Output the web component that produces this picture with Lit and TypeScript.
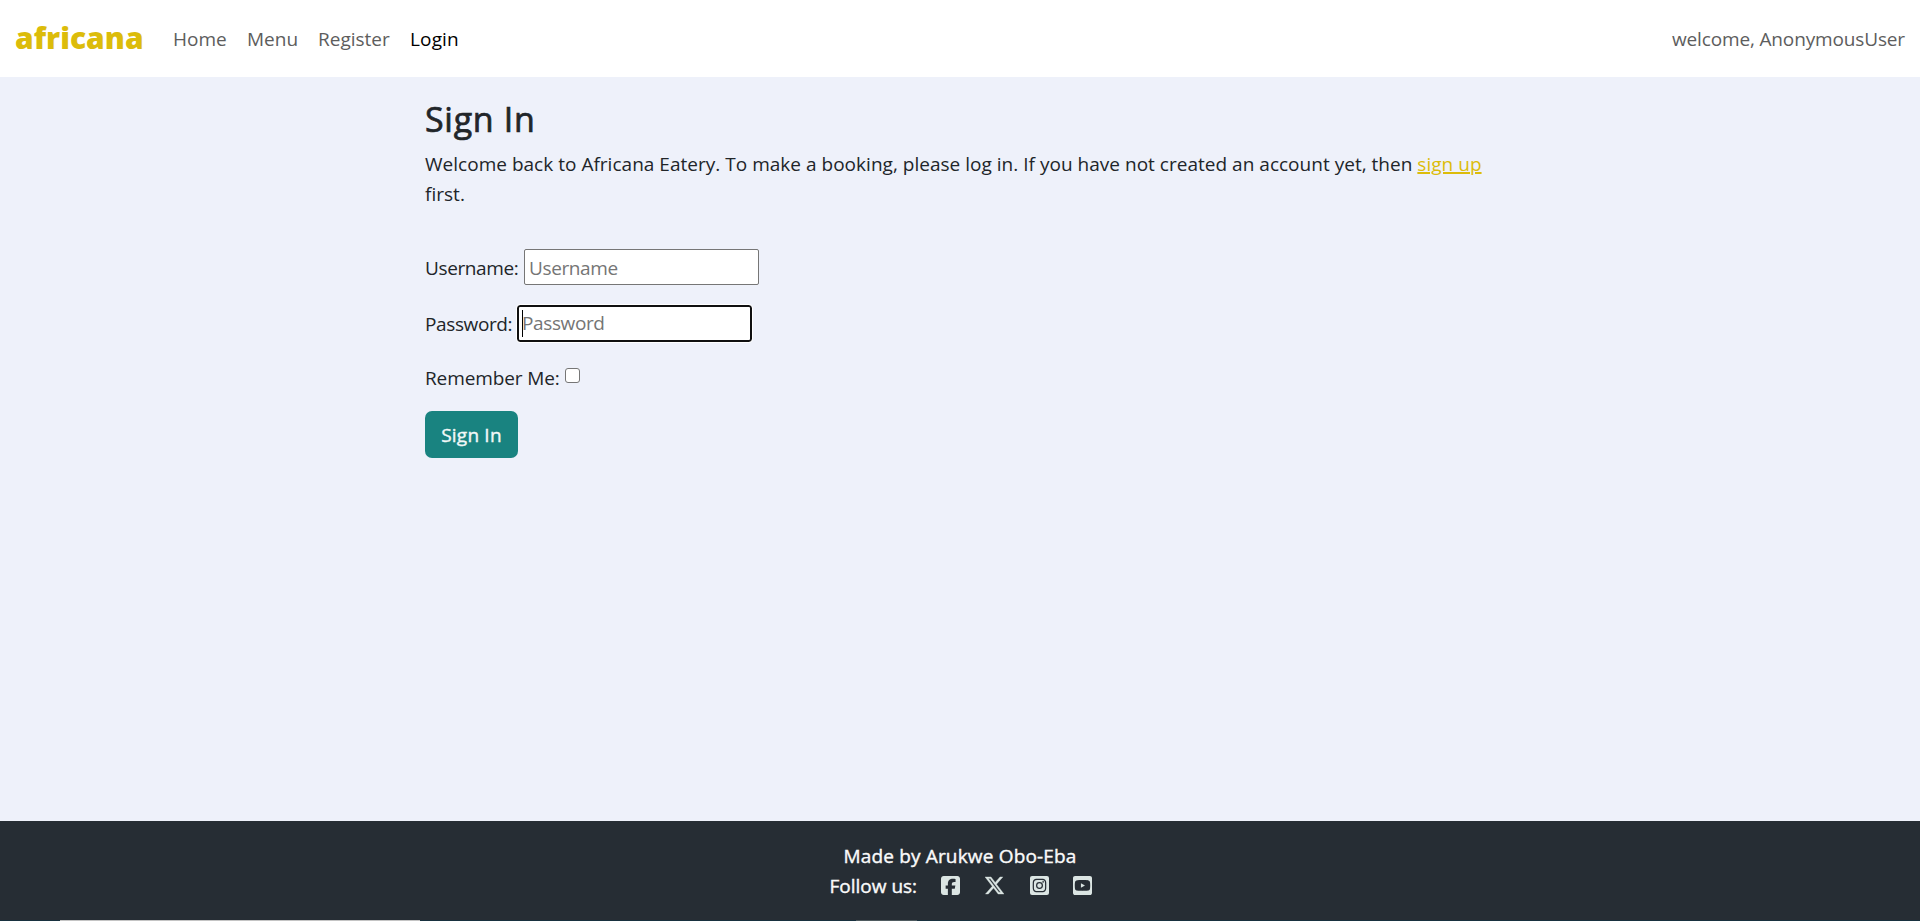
import { LitElement, html, css, svg } from "lit";
import { customElement } from "lit/decorators.js";

const ICONS = [
  {
    name: "Facebook", box: "0 32 448 448", cls: "fb",
    d: "M64 32C28.7 32 0 60.7 0 96V416c0 35.3 28.7 64 64 64h98.2V334.2H109.4V256h52.8V222.3c0-87.1 39.4-127.5 125-127.5c16.2 0 44.2 3.2 55.7 6.4V172c-6-.6-16.5-1-29.6-1c-42 0-58.2 15.9-58.2 57.2V256h83.6l-14.4 78.2H255V480H384c35.3 0 64-28.7 64-64V96c0-35.3-28.7-64-64-64H64z",
  },
  {
    name: "X", box: "26 26 461 461", cls: "x",
    d: "M389.2 48h70.6L305.6 224.2 487 464H345L233.7 318.6 106.5 464H35.8L200.7 275.5 26.8 48H172.4L272.9 180.9 389.2 48zM364.4 421.8h39.1L151.1 88h-42L364.4 421.8z",
  },
  {
    name: "Instagram", box: "0 32 448 448", cls: "ig",
    d: "M224,202.66A53.34,53.34,0,1,0,277.36,256,53.38,53.38,0,0,0,224,202.66Zm124.71-41a54,54,0,0,0-30.41-30.41c-21-8.29-71-6.43-94.3-6.43s-73.25-1.93-94.31,6.43a54,54,0,0,0-30.41,30.41c-8.28,21-6.43,71.05-6.43,94.33S91,329.26,99.32,350.33a54,54,0,0,0,30.41,30.41c21,8.29,71,6.43,94.31,6.43s73.24,1.93,94.3-6.43a54,54,0,0,0,30.41-30.41c8.35-21,6.43-71.05,6.43-94.33S357.1,182.74,348.75,161.67ZM224,338a82,82,0,1,1,82-82A81.9,81.9,0,0,1,224,338Zm85.38-148.3a19.14,19.14,0,1,1,19.13-19.14A19.1,19.1,0,0,1,309.42,189.74ZM400,32H48A48,48,0,0,0,0,80V432a48,48,0,0,0,48,48H400a48,48,0,0,0,48-48V80A48,48,0,0,0,400,32ZM382.88,322c-1.29,25.63-7.14,48.34-25.85,67s-41.4,24.63-67,25.85c-26.41,1.49-105.59,1.49-132,0-25.63-1.29-48.26-7.15-67-25.85s-24.63-41.42-25.85-67c-1.49-26.42-1.49-105.61,0-132,1.29-25.63,7.07-48.34,25.85-67s41.47-24.56,67-25.78c26.41-1.49,105.59-1.49,132,0,25.63,1.29,48.33,7.15,67,25.85s24.63,41.42,25.85,67.05C384.37,216.44,384.37,295.56,382.88,322Z",
  },
  {
    name: "YouTube", box: "0 32 448 448", cls: "yt",
    d: "M186.8 202.1l95.2 54.1-95.2 54.1V202.1zM448 80v352c0 26.5-21.5 48-48 48H48c-26.5 0-48-21.5-48-48V80c0-26.5 21.5-48 48-48h352c26.5 0 48 21.5 48 48zm-42 176.3s0-59.6-7.6-88.2c-4.2-15.8-16.5-28.2-32.2-32.4C337.9 128 224 128 224 128s-113.9 0-142.2 7.7c-15.7 4.2-28 16.6-32.2 32.4-7.6 28.5-7.6 88.2-7.6 88.2s0 59.6 7.6 88.2c4.2 15.8 16.5 27.7 32.2 31.9C110.1 384 224 384 224 384s113.9 0 142.2-7.7c15.7-4.2 28-16.1 32.2-31.9 7.6-28.5 7.6-88.1 7.6-88.1z",
  },
];

@customElement("app-root")
export class AppRoot extends LitElement {
  static styles = css`
    :host {
      display: flex;
      flex-direction: column;
      height: 921px;
      overflow: hidden;
      background: #eef1fa;
      color: #212529;
      font: 400 19px/30px "Open Sans", sans-serif;
      white-space: nowrap;
    }
    * { box-sizing: border-box; }
    header {
      display: flex;
      align-items: center;
      height: 77px;
      padding: 1px 15px 0 15px;
      background: #fff;
      color: #5d5d5d;
    }
    .brand { width: 158px; color: #dcbc0a; font-size: 30px; font-weight: 800; line-height: 38px; padding-bottom: 2px; }
    nav { display: flex; flex: 1; }
    .home { width: 74px; }
    .menu { width: 71px; }
    .register { width: 92px; }
    .login { color: #000; letter-spacing: 0.15px; }
    .welcome { letter-spacing: -0.14px; }
    main { flex: 1; padding: 22px 0 0 425px; }
    h1 { margin: 0 0 10px; font-size: 34px; font-weight: 400; line-height: 40px; letter-spacing: 0.7px; -webkit-text-stroke: 0.7px currentColor; }
    p { margin: 0; }
    .intro { letter-spacing: 0.02px; }
    .link { color: #dcbc0a; text-decoration: underline; text-decoration-thickness: 2px; }
    .row { display: flex; align-items: center; }
    .user { height: 36px; margin-top: 40px; }
    .pass { height: 37px; margin-top: 20px; }
    .remember { height: 30px; margin-top: 20px; }
    .label { padding-top: 1px; letter-spacing: -0.38px; }
    .user .label { width: 99px; }
    .pass .label { width: 92px; padding-top: 0; }
    .remember .label { width: 140px; letter-spacing: -0.12px; }
    .field {
      position: relative;
      width: 235px;
      height: 36px;
      padding: 3px 4px 0;
      border: 1px solid #767676;
      border-radius: 2px;
      background: #fff;
      color: #757575;
      letter-spacing: -0.38px;
    }
    .focused {
      border: 2px solid #101010;
      border-radius: 3px;
      height: 37px;
      padding: 1px 3px 0;
      outline: 1px solid #fff;
    }
    .caret { position: absolute; left: 3px; top: 3px; width: 1px; height: 27px; background: #000; }
    .check { width: 15px; height: 15px; margin-bottom: 3px; border: 1px solid #767676; border-radius: 3px; background: #fff; }
    .btn {
      display: flex;
      align-items: center;
      justify-content: center;
      width: 93px;
      height: 47px;
      margin-top: 19px;
      padding-top: 1px;
      border-radius: 7px;
      background: #198380;
      color: #f2f8f7;
      letter-spacing: 0.2px;
      -webkit-text-stroke: 0.4px currentColor;
    }
    footer {
      display: flex;
      flex-direction: column;
      align-items: center;
      height: 99px;
      padding-top: 20px;
      background: #262d34;
      color: #fafafa;
      -webkit-text-stroke: 0.4px currentColor;
    }
    .made { letter-spacing: 0.17px; }
    .follow { display: flex; align-items: center; width: 263px; }
    .follow .text { width: 112px; padding-left: 1px; }
    svg { width: 19px; height: 19px; fill: #dbe5e3; display: block; margin-bottom: 1px; }
    .x { margin-left: 25px; stroke: #dbe5e3; stroke-width: 8px; }
    .ig { margin-left: 26px; }
    .yt { margin-left: 24px; }
    .strip { display: flex; height: 1px; background: #18313f; }
    .s1 { width: 360px; margin-left: 60px; background: #c4c4c4; }
    .s2 { width: 61px; margin-left: 436px; background: #4f5b60; }
  `;

  render() {
    return html`
      <header>
        <div class="brand">africana</div>
        <nav>
          <div class="home">Home</div>
          <div class="menu">Menu</div>
          <div class="register">Register</div>
          <div class="login">Login</div>
        </nav>
        <div class="welcome">welcome, AnonymousUser</div>
      </header>
      <main>
        <h1>Sign In</h1>
        <p class="intro">Welcome back to Africana Eatery. To make a booking, please log in. If you have not created an account yet, then <span class="link">sign up</span><br />first.</p>
        <div class="row user"><span class="label">Username:</span><div class="field">Username</div></div>
        <div class="row pass"><span class="label">Password:</span><div class="field focused"><i class="caret"></i>Password</div></div>
        <div class="row remember"><span class="label">Remember Me:</span><span class="check"></span></div>
        <div class="btn">Sign In</div>
      </main>
      <footer>
        <div class="made">Made by Arukwe Obo-Eba</div>
        <div class="follow">
          <span class="text">Follow us:</span>
          ${ICONS.map((i) => html`<svg class=${i.cls} viewBox=${i.box} aria-label=${i.name}>${svg`<path d=${i.d}></path>`}</svg>`)}
        </div>
      </footer>
      <div class="strip"><div class="s1"></div><div class="s2"></div></div>
    `;
  }
}
